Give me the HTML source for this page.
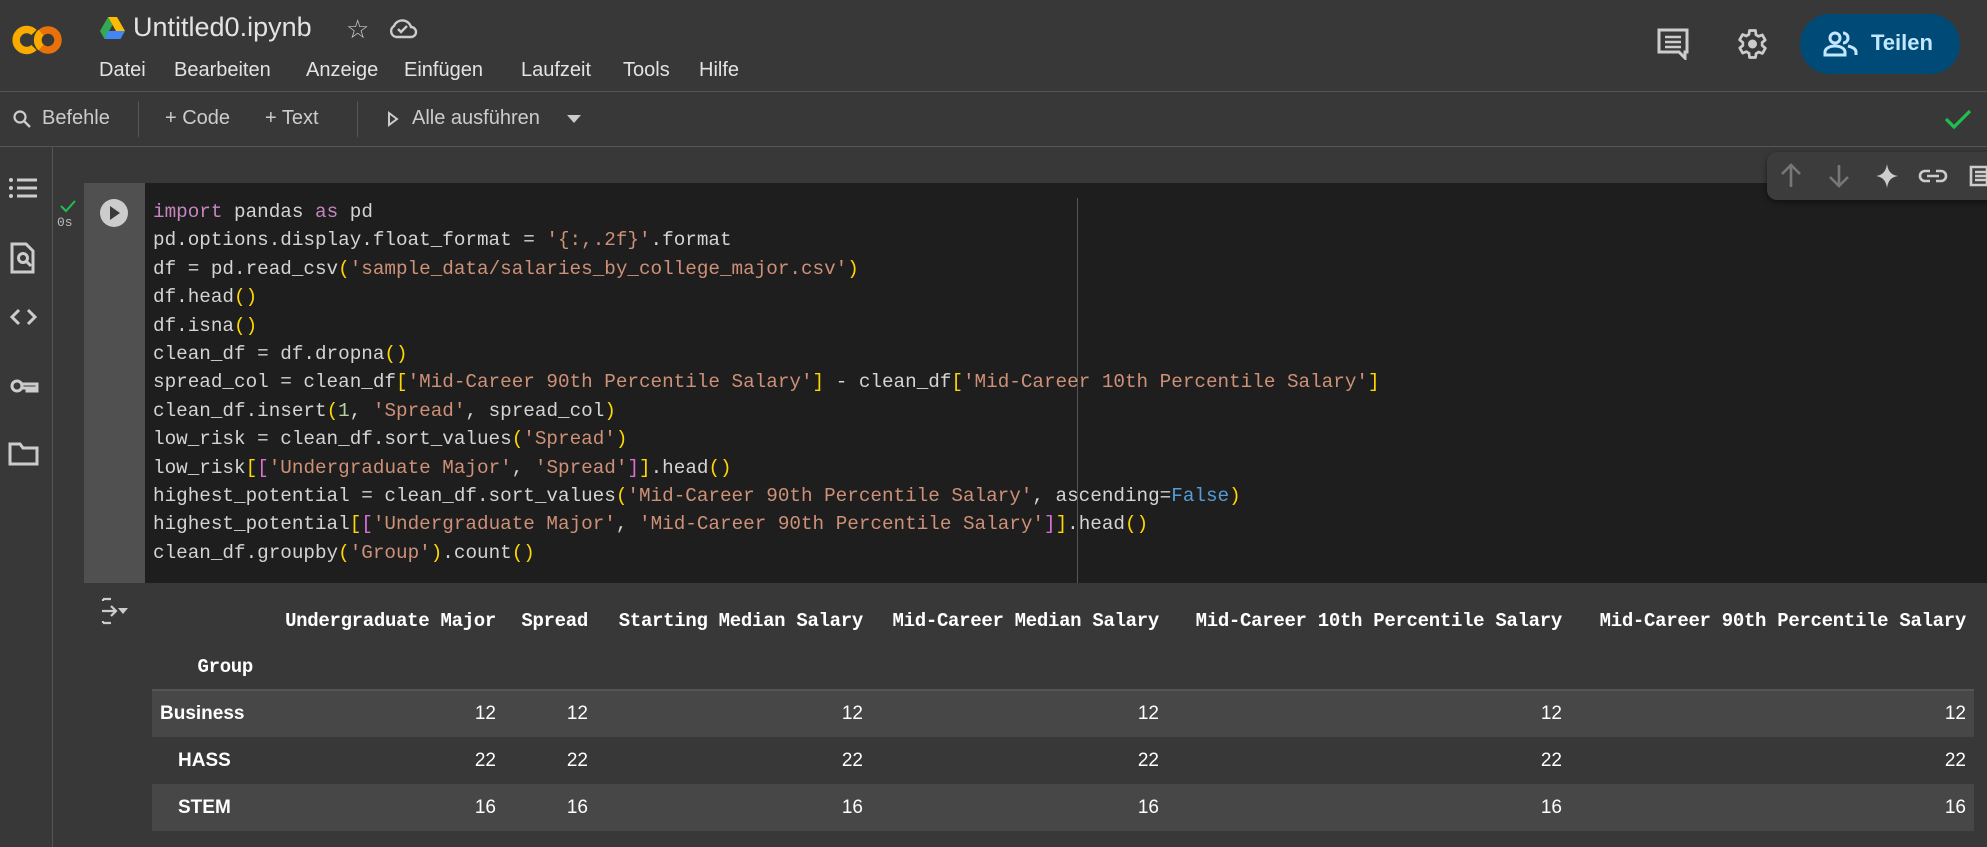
<!DOCTYPE html>
<html><head><meta charset="utf-8"><style>
*{margin:0;padding:0;box-sizing:border-box}
body{width:1987px;height:846px;background:#383838;position:relative;overflow:hidden;font-family:"Liberation Sans",sans-serif;color:#e3e3e3}
.abs{position:absolute}
.code{position:absolute;left:153px;top:198px;font-family:"Liberation Mono",monospace;font-size:19.3px;line-height:28.4px;color:#d4d4d4;white-space:pre}
.k{color:#c586c0}.s{color:#ce9178}.p{color:#ffd700}.m{color:#da70d6}.n{color:#b5cea8}.b{color:#569cd6}
table{position:absolute;left:152px;top:598px;border-collapse:collapse;font-size:19px;color:#fff}
th{font-family:"Liberation Mono",monospace;font-weight:bold;text-align:right;padding:0 8px;height:46px;white-space:nowrap;letter-spacing:-0.3px}
td{text-align:right;padding:0 8px;height:47px;font-family:"Liberation Sans",sans-serif}
td.h{text-align:left;font-weight:bold}
tr.o td{background:#474747}
</style></head><body>
<div class="abs" style="left:0;top:91px;width:1987px;height:1px;background:#555"></div>
<div class="abs" style="left:0;top:146px;width:1987px;height:1px;background:#555"></div>
<svg class="abs" style="left:12px;top:22px" width="52" height="36" viewBox="0 0 52 36">
<path d="M22 10.5A10.5 10.5 0 1 0 22 25.5" fill="none" stroke="#f9ab00" stroke-width="7.5"/>
<circle cx="36" cy="18" r="10" fill="none" stroke="#e8710a" stroke-width="7.5"/>
<path d="M29 10.5A10 10 0 0 0 29 25.5" fill="none" stroke="#f9ab00" stroke-width="7.5"/>
</svg>
<svg class="abs" style="left:100px;top:17px" width="25" height="22" viewBox="0 0 25 22">
<path d="M8 0h9l8 14h-9z" fill="#fbbc04"/><path d="M8 0L0 14l4.5 8L12.5 8z" fill="#34a853"/><path d="M4.5 22h16L25 14H8.5z" fill="#4285f4"/>
</svg>
<div class="abs" style="left:133px;top:12px;font-size:27px;color:#e3e3e3">Untitled0.ipynb</div>
<div class="abs" style="left:346px;top:14px;font-size:26px;color:#ccc">☆</div>
<svg class="abs" style="left:388px;top:16px" width="30" height="24" viewBox="0 0 30 24"><path d="M8 21h15a5 5 0 0 0 0-10 9 9 0 0 0-17-1A6 6 0 0 0 8 21z" fill="none" stroke="#ccc" stroke-width="2.4"/><path d="M10 13l3 3 6-6" fill="none" stroke="#ccc" stroke-width="2.4"/></svg>
<div class="abs" style="left:99px;top:59px;font-size:20px;color:#e3e3e3">
<span style="position:absolute;left:0">Datei</span><span style="position:absolute;left:75px">Bearbeiten</span><span style="position:absolute;left:207px">Anzeige</span><span style="position:absolute;left:305px">Einfügen</span><span style="position:absolute;left:422px">Laufzeit</span><span style="position:absolute;left:524px">Tools</span><span style="position:absolute;left:600px">Hilfe</span></div>
<svg class="abs" style="left:1657px;top:28px" width="32" height="32" viewBox="0 0 32 32"><path d="M2 2h28v22h-2v6l-6-6H2z" fill="none" stroke="#ccc" stroke-width="3"/><path d="M8 9h16M8 14h16M8 19h16" stroke="#ccc" stroke-width="2.5"/></svg>
<svg class="abs" style="left:1733px;top:26px" width="36" height="36" viewBox="0 0 24 24"><path fill="none" stroke="#ccc" stroke-width="1.8" stroke-linejoin="round" d="M19.4 13a7.5 7.5 0 0 0 0-2l2.1-1.6-2-3.5-2.5 1a7 7 0 0 0-1.7-1L15 3h-4l-.4 2.7a7 7 0 0 0-1.7 1l-2.5-1-2 3.5L6.6 11a7.5 7.5 0 0 0 0 2l-2.1 1.6 2 3.5 2.5-1a7 7 0 0 0 1.7 1L11 21h4l.4-2.7a7 7 0 0 0 1.7-1l2.5 1 2-3.5z"/><circle cx="13" cy="12" r="3" fill="#ccc"/></svg>
<div class="abs" style="left:1800px;top:14px;width:160px;height:60px;border-radius:30px;background:#004a77"></div>
<svg class="abs" style="left:1823px;top:31px" width="36" height="26" viewBox="0 0 36 26"><circle cx="12" cy="7" r="5" fill="none" stroke="#c2e7ff" stroke-width="3"/><path d="M2 24v-3c0-3 4-6 10-6s10 3 10 6v3z" fill="none" stroke="#c2e7ff" stroke-width="3"/><path d="M20 2a5 5 0 0 1 0 10M25 15c4 1 8 3 8 6v3" fill="none" stroke="#c2e7ff" stroke-width="3"/></svg>
<div class="abs" style="left:1871px;top:30px;font-size:22px;font-weight:bold;color:#c2e7ff">Teilen</div>
<svg class="abs" style="left:12px;top:109px" width="20" height="20" viewBox="0 0 20 20"><circle cx="8" cy="8" r="5.5" fill="none" stroke="#ccc" stroke-width="2.2"/><path d="M12 12l6 6" stroke="#ccc" stroke-width="2.4"/></svg>
<div class="abs" style="left:42px;top:107px;font-size:20px;color:#ccc">Befehle</div>
<div class="abs" style="left:138px;top:101px;width:1px;height:36px;background:#555"></div>
<div class="abs" style="left:165px;top:107px;font-size:20px;color:#ccc">+ Code</div>
<div class="abs" style="left:265px;top:107px;font-size:20px;color:#ccc">+ Text</div>
<div class="abs" style="left:357px;top:101px;width:1px;height:36px;background:#555"></div>
<svg class="abs" style="left:387px;top:111px" width="12" height="16" viewBox="0 0 12 16"><path d="M2 2l8 6-8 6z" fill="none" stroke="#ccc" stroke-width="2"/></svg>
<div class="abs" style="left:412px;top:107px;font-size:20px;color:#ccc">Alle ausführen</div>
<svg class="abs" style="left:566px;top:114px" width="16" height="10" viewBox="0 0 16 10"><path d="M1 1h14L8 9z" fill="#ccc"/></svg>
<svg class="abs" style="left:1944px;top:108px" width="28" height="22" viewBox="0 0 28 22"><path d="M2 11l8 8L26 3" fill="none" stroke="#1ec14f" stroke-width="3.2"/></svg>
<div class="abs" style="left:52px;top:147px;width:1px;height:700px;background:#555"></div>
<svg class="abs" style="left:7px;top:176px" width="32" height="300" viewBox="0 0 32 300" fill="none" stroke="#ccc" stroke-width="3">
<circle cx="4" cy="4" r="2" fill="#ccc" stroke="none"/><circle cx="4" cy="12" r="2" fill="#ccc" stroke="none"/><circle cx="4" cy="20" r="2" fill="#ccc" stroke="none"/>
<path d="M10 4h20M10 12h20M10 20h20"/>
<path d="M5 68h14l7 7v21H5z"/><circle cx="16" cy="82" r="4.5"/><path d="M19 85l5 5"/>
<path d="M12 134l-7 7 7 7M21 134l7 7-7 7"/>
<circle cx="10" cy="210" r="5"/><path d="M15 208h15v7h-4v-3h-3v3h-3v-3M15 212h15"/>
<path d="M3 268h10l3 4h14v16H3z"/>
</svg>
<div class="abs" style="left:84px;top:183px;width:61px;height:400px;background:#505050"></div>
<div class="abs" style="left:145px;top:183px;width:1842px;height:400px;background:#1e1e1e"></div>
<div class="abs" style="left:1077px;top:198px;width:1px;height:385px;background:#555"></div>
<svg class="abs" style="left:59px;top:199px" width="18" height="14" viewBox="0 0 18 14"><path d="M2 7l5 5L16 2" fill="none" stroke="#1ec14f" stroke-width="2"/></svg>
<div class="abs" style="left:57px;top:215px;font-size:13px;color:#bbb;font-family:'Liberation Mono',monospace">0s</div>
<div class="abs" style="left:100px;top:199px;width:28px;height:28px;border-radius:50%;background:#ccc"></div>
<svg class="abs" style="left:109px;top:205px" width="12" height="16" viewBox="0 0 12 16"><path d="M1 1l10 7-10 7z" fill="#3a3a3a"/></svg>
<div class="abs" style="left:1767px;top:152px;width:230px;height:48px;border-radius:10px;background:#3c3c3c;box-shadow:0 2px 6px rgba(0,0,0,.5)"></div>
<svg class="abs" style="left:1778px;top:163px" width="209" height="26" viewBox="0 0 209 26" fill="none" stroke-width="2.6">
<path d="M13 24V3M4 11l9-9 9 9" stroke="#777"/><path d="M61 2v21M52 14l9 9 9-9" stroke="#777"/>
<path d="M109 1c1 7 4 11 11 12-7 1-10 5-11 12-1-7-4-11-11-12 7-1 10-5 11-12z" fill="#ccc" stroke="none"/>
<path d="M152 8h-5a5 5 0 0 0 0 10h5M158 8h5a5 5 0 0 1 0 10h-5M149 13h12" stroke="#ccc"/>
<path d="M193 4h16v18h-16zM197 9h12M197 13h12M197 17h12" stroke="#ccc"/>
</svg>
<div class="code"><span class="k">import</span> pandas <span class="k">as</span> pd
pd.options.display.float_format = <span class="s">'{:,.2f}'</span>.format
df = pd.read_csv<span class="p">(</span><span class="s">'sample_data/salaries_by_college_major.csv'</span><span class="p">)</span>
df.head<span class="p">()</span>
df.isna<span class="p">()</span>
clean_df = df.dropna<span class="p">()</span>
spread_col = clean_df<span class="p">[</span><span class="s">'Mid-Career 90th Percentile Salary'</span><span class="p">]</span> - clean_df<span class="p">[</span><span class="s">'Mid-Career 10th Percentile Salary'</span><span class="p">]</span>
clean_df.insert<span class="p">(</span><span class="n">1</span>, <span class="s">'Spread'</span>, spread_col<span class="p">)</span>
low_risk = clean_df.sort_values<span class="p">(</span><span class="s">'Spread'</span><span class="p">)</span>
low_risk<span class="p">[</span><span class="m">[</span><span class="s">'Undergraduate Major'</span>, <span class="s">'Spread'</span><span class="m">]</span><span class="p">]</span>.head<span class="p">()</span>
highest_potential = clean_df.sort_values<span class="p">(</span><span class="s">'Mid-Career 90th Percentile Salary'</span>, ascending=<span class="b">False</span><span class="p">)</span>
highest_potential<span class="p">[</span><span class="m">[</span><span class="s">'Undergraduate Major'</span>, <span class="s">'Mid-Career 90th Percentile Salary'</span><span class="m">]</span><span class="p">]</span>.head<span class="p">()</span>
clean_df.groupby<span class="p">(</span><span class="s">'Group'</span><span class="p">)</span>.count<span class="p">()</span></div>
<svg class="abs" style="left:100px;top:596px" width="30" height="30" viewBox="0 0 30 30" fill="none" stroke="#ccc" stroke-width="2.2"><path d="M3 3h8M3 3v2M3 27h8M3 27v-2M2 15h14M11 10l5 5-5 5"/><path d="M18 12h10l-5 6z" fill="#ccc" stroke="none"/></svg>
<table>
<tr><th style="width:115px"></th><th style="width:237px">Undergraduate Major</th><th style="width:92px">Spread</th><th style="width:275px">Starting Median Salary</th><th style="width:296px">Mid-Career Median Salary</th><th style="width:403px">Mid-Career 10th Percentile Salary</th><th style="width:404px">Mid-Career 90th Percentile Salary</th></tr>
<tr style="border-bottom:2px solid #555"><th style="padding-right:14px">Group</th><th></th><th></th><th></th><th></th><th></th><th></th></tr>
<tr class="o"><td class="h">Business</td><td>12</td><td>12</td><td>12</td><td>12</td><td>12</td><td>12</td></tr>
<tr><td class="h" style="padding-left:26px">HASS</td><td>22</td><td>22</td><td>22</td><td>22</td><td>22</td><td>22</td></tr>
<tr class="o"><td class="h" style="padding-left:26px">STEM</td><td>16</td><td>16</td><td>16</td><td>16</td><td>16</td><td>16</td></tr>
</table>
</body></html>
